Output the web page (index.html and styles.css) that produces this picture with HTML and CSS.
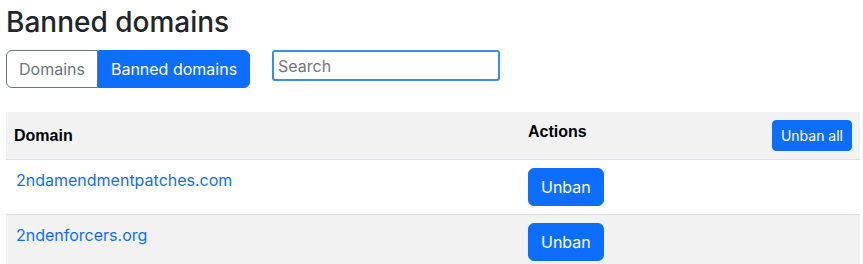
FILE: index.html
```html
<!DOCTYPE html>
<html lang="en">
<head>
    <meta charset="UTF-8">
    <meta name="viewport" content="width=device-width, initial-scale=1.0">
    <title>Banned domains</title>
    <link rel="stylesheet" href="styles.css">
</head>
<body>
    <div class="page">
        <h2 class="title">Banned domains</h2>

        <div class="toolbar">
            <div class="btn-group">
                <a class="btn btn-outline" href="#">Domains</a>
                <a class="btn btn-primary" href="#">Banned domains</a>
            </div>
            <input class="search" type="text" placeholder="Search" autofocus>
        </div>

        <table class="domains">
            <thead>
                <tr>
                    <th class="col-domain">Domain</th>
                    <th class="col-actions">
                        <button class="btn btn-primary btn-sm float-right">Unban all</button>
                        Actions
                    </th>
                </tr>
            </thead>
            <tbody>
                <tr>
                    <td><a class="domain-link" href="#">2ndamendmentpatches.com</a></td>
                    <td><button class="btn btn-primary">Unban</button></td>
                </tr>
                <tr>
                    <td><a class="domain-link" href="#">2ndenforcers.org</a></td>
                    <td><button class="btn btn-primary">Unban</button></td>
                </tr>
            </tbody>
        </table>
    </div>
</body>
</html>
```

FILE: styles.css
```css
* {
    box-sizing: border-box;
}
body {
    margin: 0;
    font-family: 'Inter', 'Noto Sans', sans-serif;
    font-size: 16px;
    line-height: 1.5;
    color: #212529;
    background: #fff;
}
.page {
    padding: 5px 3px 0 6px;
}
.title {
    margin: 0;
    font-size: 28px;
    font-weight: 500;
    line-height: 35px;
}
.toolbar {
    display: flex;
    align-items: flex-start;
    gap: 22px;
    margin-top: 10px;
}
.btn-group {
    display: flex;
}
.btn {
    display: inline-block;
    padding: 6px 12px;
    font-family: 'Inter', 'Noto Sans', sans-serif;
    font-size: 16px;
    line-height: 24px;
    text-decoration: none;
    border: 1px solid transparent;
    border-radius: 6px;
    cursor: pointer;
}
.btn-primary {
    color: #fff;
    background: #0d6efd;
    border-color: #0d6efd;
}
.btn-outline {
    color: #6c757d;
    background: #fff;
    border-color: #6c757d;
}
.btn-group .btn:first-child {
    border-top-right-radius: 0;
    border-bottom-right-radius: 0;
}
.btn-group .btn:last-child {
    border-top-left-radius: 0;
    border-bottom-left-radius: 0;
}
.btn-sm {
    padding: 3px 8px;
    font-size: 14px;
    line-height: 23px;
    border-radius: 4px;
}
.float-right {
    float: right;
}
.search {
    width: 228px;
    height: 31px;
    padding: 0 4px;
    font-family: 'Inter', 'Noto Sans', sans-serif;
    font-size: 16px;
    color: #212529;
    border: 2px solid #3b8ee6;
    border-radius: 3px;
    outline: none;
}
.search::placeholder {
    color: #757575;
}
.domains {
    width: 854px;
    margin-top: 24px;
    border-collapse: collapse;
}
.domains th {
    padding: 8px;
    font-family: 'Liberation Sans', Arial, sans-serif;
    font-weight: bold;
    color: #000;
    text-align: left;
    vertical-align: middle;
    background: #f2f2f2;
    border-bottom: 1px solid #dee2e6;
}
.domains .col-domain {
    width: 514px;
}
.domains .col-actions {
    vertical-align: middle;
}
.domains td {
    padding: 8px;
    vertical-align: top;
    border-bottom: 1px solid #dee2e6;
}
.domains tbody tr:nth-child(even) td {
    background: #f2f2f2;
}
.domains tbody tr:last-child td {
    border-bottom: none;
}
.domain-link {
    margin-left: 2px;
    color: #0d6efd;
    text-decoration: none;
}
```
